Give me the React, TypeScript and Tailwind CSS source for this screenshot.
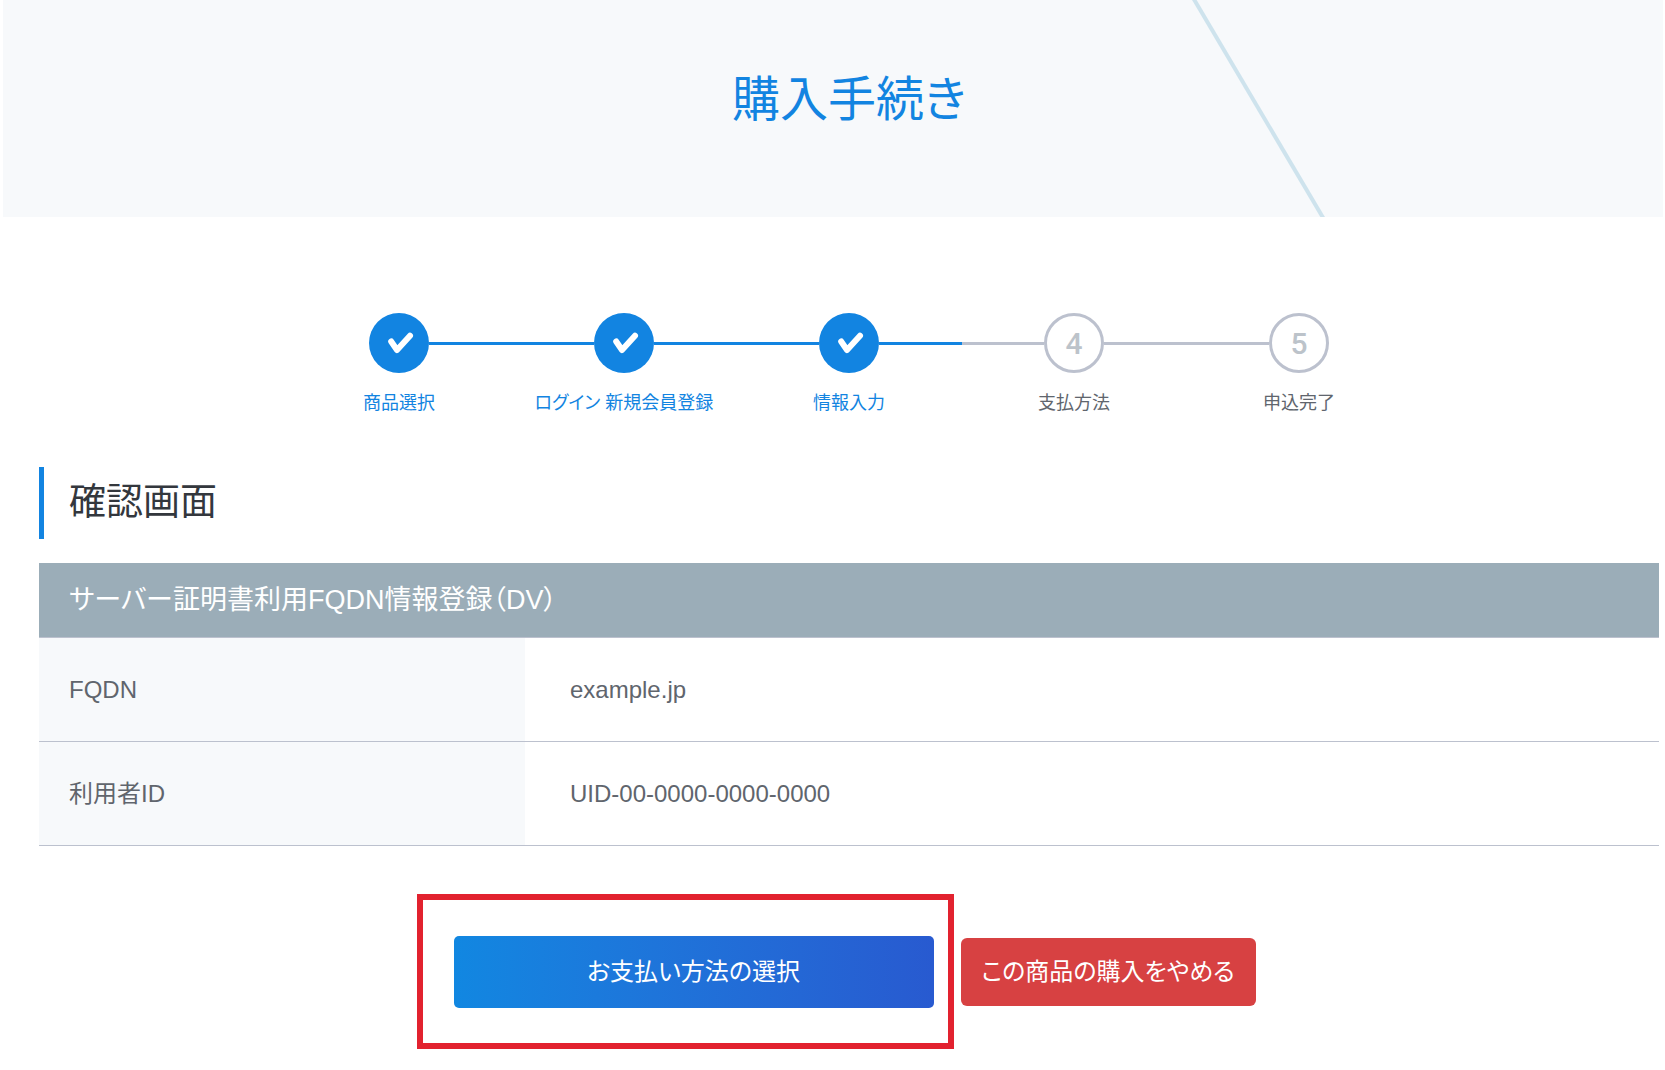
import React from "react";
import clsx from "clsx";

const steps = [
  { id: 1, label: "商品選択", done: true },
  { id: 2, label: "ログイン 新規会員登録", done: true },
  { id: 3, label: "情報入力", done: true },
  { id: 4, label: "支払方法", done: false },
  { id: 5, label: "申込完了", done: false },
];

const rows = [
  { name: "FQDN", value: "example.jp" },
  { name: "利用者ID", value: "UID-00-0000-0000-0000" },
];

const CheckMark = () => (
  <svg viewBox="0 0 60 60" className="size-full" aria-hidden="true">
    <path
      d="M22.2 28.5 L28 37 L41 22.8"
      fill="none"
      stroke="#fff"
      strokeWidth="6"
      strokeLinecap="round"
      strokeLinejoin="round"
    />
  </svg>
);

const PageHeader = () => (
  <header className="relative mr-0.5 ml-[3px] overflow-hidden bg-[#f7f9fb] pt-16 pb-[81px] pl-8 text-center">
    <svg
      viewBox="0 0 130 217"
      className="absolute top-0 right-[339px] h-full overflow-visible"
      aria-hidden="true"
    >
      <path d="M-2 -4 L131 221" stroke="#cee3ed" strokeWidth="4" />
    </svg>
    <h1 className="text-[48px] leading-[72px] text-[#1284e1]">購入手続き</h1>
  </header>
);

const StepBar = () => (
  <ol className="mx-auto grid w-full max-w-[1125px] grid-cols-5">
    {steps.map((step, i) => (
      <li key={step.id} className="flex flex-col items-center gap-4">
        <div className="flex w-full items-center">
          <span
            className={clsx(
              "h-[3px] flex-1",
              i > 0 && (step.done ? "bg-[#1284e1]" : "bg-[#bcc1ce]"),
            )}
          />
          <span
            className={clsx(
              "flex size-[60px] items-center justify-center rounded-full font-['Roboto',sans-serif] text-[30px] font-medium",
              step.done
                ? "bg-[#1284e1]"
                : "border-[3px] border-[#bcc1ce] text-[#bcc3ca]",
            )}
          >
            {step.done ? <CheckMark /> : step.id}
          </span>
          <span
            className={clsx(
              "h-[3px] flex-1",
              i < steps.length - 1 &&
                (step.done ? "bg-[#1284e1]" : "bg-[#bcc1ce]"),
            )}
          />
        </div>
        <span
          className={clsx(
            "text-[18px] leading-7 whitespace-nowrap",
            step.done ? "text-[#1284e1]" : "text-[#60656d]",
          )}
        >
          {step.label}
        </span>
      </li>
    ))}
  </ol>
);

const ConfirmTable = () => (
  <table className="mt-6 w-full table-fixed border-collapse text-left">
    <colgroup>
      <col className="w-[30%]" />
      <col />
    </colgroup>
    <thead>
      <tr className="border-b border-[#bcc1ce] bg-[#9badb8] text-white">
        <th
          colSpan={2}
          scope="colgroup"
          className="px-[30px] py-[17px] text-[27px] leading-10 font-normal"
        >
          サーバー証明書利用FQDN情報登録（DV）
        </th>
      </tr>
    </thead>
    <tbody className="text-[24px] leading-9 text-[#60656d]">
      {rows.map((row) => (
        <tr key={row.name} className="border-b border-[#bcc1ce]">
          <th
            scope="row"
            className="bg-[#f7f9fb] pt-[34px] pb-[33px] pl-[30px] font-normal"
          >
            {row.name}
          </th>
          <td className="pt-[34px] pb-[33px] pl-[45px]">{row.value}</td>
        </tr>
      ))}
    </tbody>
  </table>
);

export default function App() {
  return (
    <div className="bg-white font-['Liberation_Sans','Noto_Sans_CJK_JP',sans-serif] [font-feature-settings:'palt']">
      <PageHeader />
      <main className="pt-24 pr-1.5 pb-5 pl-[39px]">
        <StepBar />
        <h2 className="mt-[50px] border-l-[5px] border-[#1284e1] pl-[25px] text-[37px] leading-[72px] text-[#33373d]">
          確認画面
        </h2>
        <ConfirmTable />
        <div className="mt-12 flex items-center justify-center gap-[7px] pr-[26px]">
          <div className="border-6 border-[#e2222f] pt-9 pr-3.5 pb-[35px] pl-[31px]">
            <button
              type="button"
              className="block h-[72px] w-[480px] rounded-[5px] bg-linear-to-r from-[#1187e1] to-[#285ad0] text-[24px] text-white"
            >
              お支払い方法の選択
            </button>
          </div>
          <button
            type="button"
            className="h-[68px] w-[295px] rounded-md bg-[#d74142] text-[24px] text-white"
          >
            この商品の購入をやめる
          </button>
        </div>
      </main>
    </div>
  );
}
